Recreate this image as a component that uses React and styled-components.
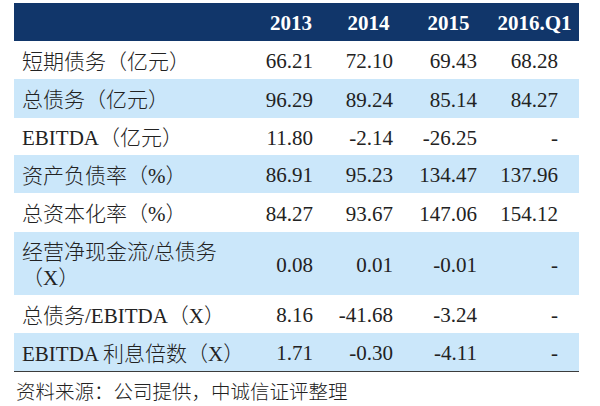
import React from "react";
import styled, { createGlobalStyle } from "styled-components";

const Global = createGlobalStyle`
  html, body { margin: 0; padding: 0; background: #ffffff; }
  body { width: 600px; height: 406px; overflow: hidden; }
`;

const COLS = "238px 78px 77px 83px 89px";
const PADS = [17, 14, 13, 21];

const Page = styled.div`
  padding: 3px 0 0 14px;
  font-family: "Liberation Serif", "Noto Sans CJK SC", serif;
  color: #222222;
`;

const Table = styled.div`
  width: 565px;
  border-bottom: 1px solid #3c3c3c;
`;

const Row = styled.div`
  display: grid;
  grid-template-columns: ${COLS};
  height: ${(p) => p.$h}px;
  background: ${(p) =>
    p.$head ? "#11366a" : p.$shade ? "#cbe7fa" : "#ffffff"};
  color: ${(p) => (p.$head ? "#ffffff" : "#222222")};
  font-weight: ${(p) => (p.$head ? 700 : 300)};
  font-size: 21px;
`;

const HeadCell = styled.div`
  display: flex;
  align-items: center;
  justify-content: center;
  padding-top: 2px;
`;

const Label = styled.div`
  display: flex;
  align-items: center;
  padding: 3px 0 0 8px;
  line-height: 26px;
  white-space: nowrap;
`;

const Value = styled.div`
  display: flex;
  align-items: center;
  justify-content: flex-end;
  padding: 3px ${(p) => p.$pr}px 0 0;
  white-space: nowrap;
`;

const Footer = styled.div`
  padding: 6px 0 0 2px;
  font-family: "Noto Sans CJK SC", sans-serif;
  font-weight: 300;
  font-size: 19.5px;
  line-height: 26px;
  color: #222222;
`;

const rows = [
  { label: "短期债务（亿元）", v: ["66.21", "72.10", "69.43", "68.28"], h: 38 },
  { label: "总债务（亿元）", v: ["96.29", "89.24", "85.14", "84.27"], h: 39 },
  { label: "EBITDA（亿元）", v: ["11.80", "-2.14", "-26.25", "-"], h: 37 },
  { label: "资产负债率（%）", v: ["86.91", "95.23", "134.47", "137.96"], h: 38 },
  { label: "总资本化率（%）", v: ["84.27", "93.67", "147.06", "154.12"], h: 39 },
  {
    label: (
      <span>
        经营净现金流/总债务
        <br />
        （X）
      </span>
    ),
    v: ["0.08", "0.01", "-0.01", "-"],
    h: 63,
  },
  { label: "总债务/EBITDA（X）", v: ["8.16", "-41.68", "-3.24", "-"], h: 38 },
  { label: "EBITDA 利息倍数（X）", v: ["1.71", "-0.30", "-4.11", "-"], h: 38 },
];

export default function App() {
  return (
    <>
      <Global />
      <Page>
        <Table>
          <Row $head $h={38}>
            <HeadCell />
            <HeadCell>2013</HeadCell>
            <HeadCell>2014</HeadCell>
            <HeadCell>2015</HeadCell>
            <HeadCell>2016.Q1</HeadCell>
          </Row>
          {rows.map((r, i) => (
            <Row key={i} $shade={i % 2 === 1} $h={r.h}>
              <Label>{r.label}</Label>
              {r.v.map((val, j) => (
                <Value key={j} $pr={PADS[j]}>
                  {val}
                </Value>
              ))}
            </Row>
          ))}
        </Table>
        <Footer>资料来源：公司提供，中诚信证评整理</Footer>
      </Page>
    </>
  );
}
